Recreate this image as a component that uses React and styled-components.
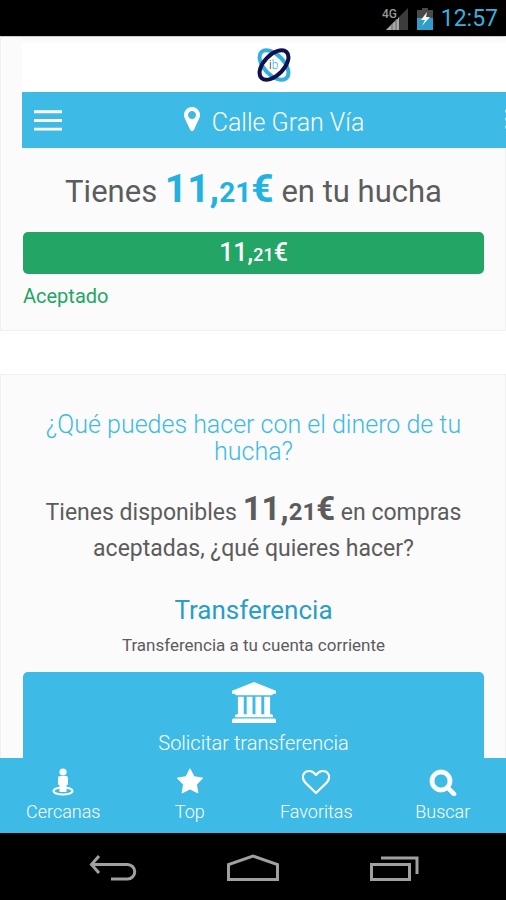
import React from "react";
import styled, { createGlobalStyle } from "styled-components";

const GlobalStyle = createGlobalStyle`
  * {
    box-sizing: border-box;
  }

  body {
    margin: 0;
    background: #000;
    font-family: Roboto, "Liberation Sans", sans-serif;
    color: #5c5c5c;
  }

  button {
    border: 0;
    padding: 0;
    background: none;
    font-family: inherit;
    cursor: pointer;
  }
`;

const Screen = styled.div`
  display: flex;
  flex-direction: column;
  height: 100vh;
`;

const StatusBar = styled.div`
  display: flex;
  flex-shrink: 0;
  align-items: center;
  justify-content: flex-end;
  gap: 8px;
  height: 36px;
  padding: 2px 8px 0;
  background: #000;
`;

const Clock = styled.time`
  color: #36b1df;
  font-size: 23px;
  line-height: 34px;
`;

const Content = styled.main`
  flex: 1;
  min-height: 0;
  overflow: hidden;
  background: #fff;
`;

const Card = styled.section`
  margin-bottom: 43px;
  border: 1px solid #f0f0f0;
  border-top-color: ${(props) => (props.$first ? "#ccc" : "#f0f0f0")};
  background: #fbfbfb;
  text-align: center;
`;

const CardBody = styled.div`
  padding: ${(props) => props.$padding};
`;

const Header = styled.header`
  width: 100%;
  margin-left: 21px;
`;

const LogoBar = styled.div`
  display: flex;
  align-items: center;
  justify-content: center;
  height: 55px;
  background: linear-gradient(#f6f6f6, #fff 8px);
`;

const NavBar = styled.div`
  display: grid;
  grid-template-columns: 52px 1fr 52px;
  align-items: center;
  height: 56px;
  background: #3dbae5;
`;

const MenuButton = styled.button`
  display: flex;
  justify-content: ${(props) => (props.$end ? "flex-end" : "flex-start")};
  padding: 0 ${(props) => (props.$end ? 17 : 12)}px;
`;

const Address = styled.div`
  display: flex;
  align-items: center;
  justify-content: center;
  gap: 12px;
  color: #fff;
  font-size: 25px;
  font-weight: 300;
  line-height: 32px;

  span {
    padding-top: 6px;
  }

  svg {
    margin-bottom: 2px;
  }
`;

const Balance = styled.h1`
  margin: 0;
  font-size: 31px;
  font-weight: 400;
  line-height: 46px;
`;

const Amount = styled.strong`
  color: ${(props) => props.$color || "inherit"};
  font-size: ${(props) => props.$size}px;
  font-weight: ${(props) => props.$weight || 700};

  small {
    font-size: ${(props) => props.$cents}px;
  }
`;

const AcceptedBar = styled.div`
  height: 42px;
  margin-top: 16px;
  border-radius: 5px;
  background: #22a565;
  color: #fff;
  line-height: 42px;
`;

const Status = styled.p`
  margin: 8px 0 0;
  color: #22a565;
  font-size: 20px;
  line-height: 28px;
  text-align: left;
`;

const Question = styled.h2`
  margin: 0;
  color: #3dbae5;
  font-size: 25px;
  font-weight: 300;
  line-height: 27px;
`;

const Available = styled.p`
  margin: 26px 0 0;
  font-size: 23px;
  line-height: 36px;
`;

const OptionTitle = styled.h3`
  margin: 27px 0 0;
  color: #2a9dc9;
  font-size: 26px;
  font-weight: 400;
  line-height: 32px;
`;

const OptionText = styled.p`
  margin: 8px 0 0;
  font-size: 17px;
  line-height: 22px;
`;

const RequestButton = styled.button`
  display: flex;
  flex-direction: column;
  align-items: center;
  gap: 8px;
  width: 100%;
  margin-top: 16px;
  padding: 10px 12px 14px;
  border-radius: 5px;
  background: #3dbae5;
  color: #fff;
  font-size: 20px;
  font-weight: 300;
  line-height: 24px;
`;

const TabBar = styled.nav`
  display: grid;
  flex-shrink: 0;
  grid-template-columns: repeat(4, 1fr);
  height: 75px;
  background: #3dbae5;
`;

const Tab = styled.a`
  display: flex;
  flex-direction: column;
  align-items: center;
  gap: 4px;
  padding-top: 10px;
  color: #fff;
  font-size: 18px;
  font-weight: 300;
  line-height: 24px;
  text-decoration: none;
`;

const SystemBar = styled.div`
  display: flex;
  flex-shrink: 0;
  align-items: center;
  justify-content: center;
  gap: 89px;
  height: 67px;
  padding-top: 5px;
  background: #000;
`;

const SignalIcon = () => (
  <svg width="28" height="24" viewBox="0 0 28 24" aria-label="4G">
    <path d="M27 1v22H5z" fill="#3c3c3c" />
    <path d="M18 10v13H5z" fill="#a8a8a8" />
    <path d="M11 17v6M15 13v10" stroke="#666" />
    <path d="M0 0h17v12H0z" fill="#000" />
    <text x="1" y="11" fontSize="12" fontWeight="500" fill="#999">
      4G
    </text>
  </svg>
);

const BatteryIcon = () => (
  <svg width="16" height="22" viewBox="0 0 16 22">
    <path d="M5 0h6v2h5v8H0V2h5z" fill="#4a4a4a" />
    <path d="M0 10h16v12H0z" fill="#2f9fca" />
    <path d="M10 4L4 12h4l-3 6 8-9H9z" fill="#fff" />
  </svg>
);

const Logo = () => (
  <svg width="36" height="36" viewBox="0 0 36 36" fill="none" strokeWidth="4">
    <ellipse cx="18" cy="18" rx="18" ry="10" transform="rotate(46 18 18)" stroke="#35b0db" />
    <ellipse cx="18" cy="18" rx="18" ry="10" transform="rotate(-46 18 18)" stroke="#10104e" />
    <text x="13" y="22" fontSize="12" fontWeight="300" fill="#222">
      i<tspan fill="#35b0db">b</tspan>
    </text>
  </svg>
);

const MenuIcon = () => (
  <svg width="29" height="24" viewBox="0 0 29 24" stroke="#fff" strokeWidth="3">
    <path d="M0 3.500h29M0 12.500h29M0 21.500h29" />
  </svg>
);

const DotsIcon = () => (
  <svg width="4" height="24" viewBox="0 0 4 24" fill="#fff" opacity="0.7">
    <circle cx="2" cy="3" r="2" />
    <circle cx="2" cy="11" r="2" />
    <circle cx="2" cy="19" r="2" />
  </svg>
);

const MarkerIcon = () => (
  <svg width="16" height="24" viewBox="384 128 1024 1536" fill="#fff">
    <path d="M1152 640q0-106-75-181t-181-75-181 75-75 181 75 181 181 75 181-75 75-181zm256 0q0 109-33 179l-364 774q-16 33-47.500 52t-67.500 19-67.500-19-46.500-52l-365-774q-33-70-33-179 0-212 150-362t362-150 362 150 150 362z" />
  </svg>
);

const BankIcon = () => (
  <svg width="44" height="41" viewBox="0 0 1920 1792" fill="#fff">
    <path d="M960 0l960 384v128h-128q0 26-20.500 45t-48.500 19h-1526q-28 0-48.500-19t-20.500-45h-128v-128zm-704 640h256v768h128v-768h256v768h128v-768h256v768h128v-768h256v768h59q28 0 48.500 19t20.500 45v64h-1664v-64q0-26 20.500-45t48.500-19h59v-768zm1595 960q28 0 48.500 19t20.500 45v128h-1920v-128q0-26 20.500-45t48.500-19h1782z" />
  </svg>
);

const StreetViewIcon = () => (
  <svg width="28" height="28" viewBox="0 0 28 28" fill="#fff">
    <ellipse cx="14" cy="23" rx="9.500" ry="3.600" fill="none" stroke="#fff" strokeWidth="2" />
    <circle cx="14" cy="4" r="3.600" />
    <path d="M11 8h6q2 0 2 2v6q0 1-1.500 1.200V24h-7v-6.800Q9 17 9 16v-6q0-2 2-2z" />
  </svg>
);

const StarIcon = () => (
  <svg width="28" height="28" viewBox="0 0 1792 1792" fill="#fff">
    <path d="M1728 647q0 22-26 48l-363 354 86 500q1 7 1 20 0 21-10.500 35.500t-30.500 14.500q-19 0-40-12l-449-236-449 236q-22 12-40 12-21 0-31.500-14.500t-10.500-35.500q0-6 2-20l86-500-364-354q-25-27-25-48 0-37 56-46l502-73 225-455q19-41 49-41t49 41l225 455 502 73q56 9 56 46z" />
  </svg>
);

const HeartIcon = () => (
  <svg width="28" height="28" viewBox="0 0 28 28" fill="none" stroke="#fff" strokeWidth="2.200">
    <path d="M14 25L3.300 14.600C-1.500 9 1.500 3 7.500 3c3 0 4.700 1.700 6.500 4 1.800-2.300 3.500-4 6.500-4 6 0 9 6 4.200 11.600z" strokeLinejoin="round" />
  </svg>
);

const SearchIcon = () => (
  <svg width="28" height="28" viewBox="0 0 1792 1792" fill="#fff" stroke="#fff" strokeWidth="50">
    <path d="M1216 832q0-185-131.500-316.500t-316.500-131.500-316.500 131.500-131.500 316.500 131.500 316.500 316.500 131.500 316.500-131.500 131.500-316.500zm512 832q0 52-38 90t-90 38q-54 0-90-38l-343-342q-179 124-399 124-143 0-273.500-55.500t-225-150-150-225-55.500-273.500 55.500-273.500 150-225 225-150 273.500-55.500 273.500 55.500 225 150 150 225 55.500 273.500q0 220-124 399l343 343q37 37 37 90z" />
  </svg>
);

const BackIcon = () => (
  <svg width="50" height="28" viewBox="0 0 50 28" fill="none" stroke="#a0a0a0" strokeWidth="3">
    <path d="M12 2L4.500 10.500 12 19M5 10.500h35.500a7 7 0 0 1 0 14.500H24" />
  </svg>
);

const HomeIcon = () => (
  <svg width="54" height="28" viewBox="0 0 54 28" fill="none" stroke="#a0a0a0" strokeWidth="3">
    <path d="M2.500 25.500v-15L27 2l24.500 8.500v15z" />
  </svg>
);

const RecentIcon = () => (
  <svg width="50" height="28" viewBox="0 0 50 28" fill="none" stroke="#a0a0a0" strokeWidth="3">
    <path d="M2.500 10.500h38v15h-38zM12 4h36v16" />
  </svg>
);

const tabs = [
  { label: "Cercanas", icon: <StreetViewIcon /> },
  { label: "Top", icon: <StarIcon /> },
  { label: "Favoritas", icon: <HeartIcon /> },
  { label: "Buscar", icon: <SearchIcon /> },
];

const Euros = (props) => (
  <Amount {...props}>
    11,<small>21</small>€
  </Amount>
);

const App = () => {
  return (
    <Screen>
      <GlobalStyle />
      <StatusBar>
        <SignalIcon />
        <BatteryIcon />
        <Clock>12:57</Clock>
      </StatusBar>
      <Content>
        <Card $first>
          <Header>
            <LogoBar>
              <Logo />
            </LogoBar>
            <NavBar>
              <MenuButton aria-label="Menú">
                <MenuIcon />
              </MenuButton>
              <Address>
                <MarkerIcon />
                <span>Calle Gran Vía</span>
              </Address>
              <MenuButton $end aria-label="Opciones">
                <DotsIcon />
              </MenuButton>
            </NavBar>
          </Header>
          <CardBody $padding="18px 21px 20px 22px">
            <Balance>
              Tienes <Euros $color="#22b2e2" $size={39} $cents={28} /> en tu hucha
            </Balance>
            <AcceptedBar>
              <Euros $size={25} $cents={18} $weight={500} />
            </AcceptedBar>
            <Status>Aceptado</Status>
          </CardBody>
        </Card>
        <Card>
          <CardBody $padding="36px 21px 36px 22px">
            <Question>¿Qué puedes hacer con el dinero de tu hucha?</Question>
            <Available>
              Tienes disponibles <Euros $size={33} $cents={24} /> en compras
              aceptadas, ¿qué quieres hacer?
            </Available>
            <OptionTitle>Transferencia</OptionTitle>
            <OptionText>Transferencia a tu cuenta corriente</OptionText>
            <RequestButton>
              <BankIcon />
              Solicitar transferencia
            </RequestButton>
          </CardBody>
        </Card>
      </Content>
      <TabBar>
        {tabs.map((tab) => (
          <Tab key={tab.label} href="#">
            {tab.icon}
            {tab.label}
          </Tab>
        ))}
      </TabBar>
      <SystemBar>
        <button aria-label="Atrás">
          <BackIcon />
        </button>
        <button aria-label="Inicio">
          <HomeIcon />
        </button>
        <button aria-label="Recientes">
          <RecentIcon />
        </button>
      </SystemBar>
    </Screen>
  );
};

export default App;
